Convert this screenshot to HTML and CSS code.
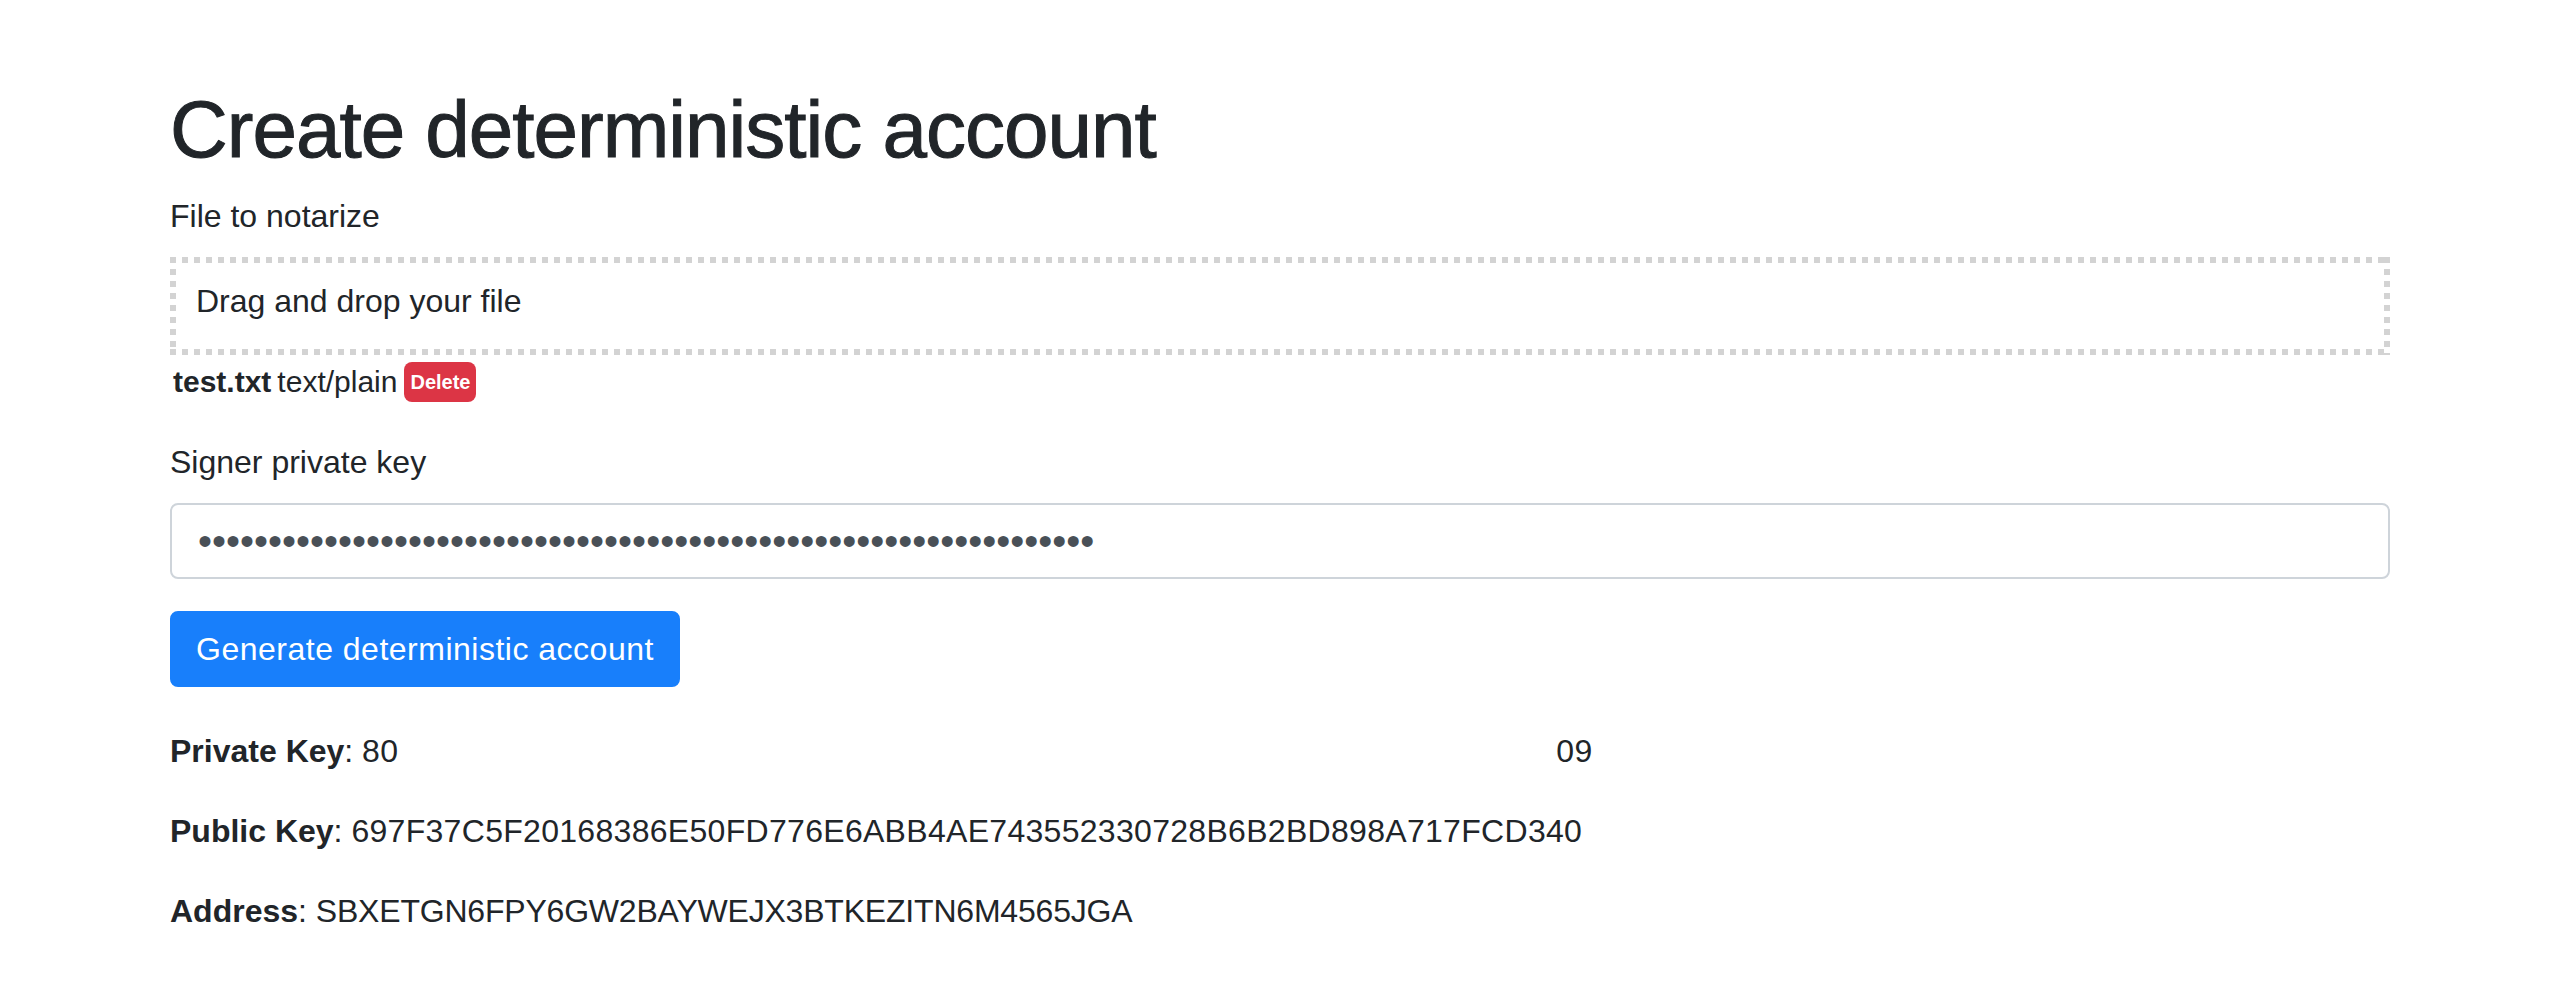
FILE: index.html
```html
<!DOCTYPE html>
<html lang="en">
<head>
<meta charset="utf-8">
<title>Create deterministic account</title>
<link rel="stylesheet" href="styles.css">
</head>
<body>
<div class="container">
  <h1 class="title">Create deterministic account</h1>
  <form class="form">
    <div class="form-group file-group">
      <label class="label">File to notarize</label>
      <div class="dropzone">Drag and drop your file</div>
      <div class="file-info">
        <strong class="file-name">test.txt</strong>
        <span class="file-type">text/plain</span>
        <span class="badge-delete">Delete</span>
      </div>
    </div>
    <div class="form-group">
      <label class="label" for="pk">Signer private key</label>
      <input id="pk" class="form-control" type="password" value="8000000000000000000000000000000000000000000000000000000000000009">
    </div>
    <button type="button" class="btn-primary">Generate deterministic account</button>
  </form>
  <div class="results">
    <p class="result"><strong>Private Key</strong>: <span class="hex">80</span><span class="redacted"></span><span class="hex">09</span></p>
    <p class="result"><strong>Public Key</strong>: <span class="hex">697F37C5F20168386E50FD776E6ABB4AE743552330728B6B2BD898A717FCD340</span></p>
    <p class="result"><strong>Address</strong>: <span class="addr">SBXETGN6FPY6GW2BAYWEJX3BTKEZITN6M4565JGA</span></p>
  </div>
</div>
</body>
</html>
```
FILE: styles.css
```css
* { box-sizing: border-box; }
html, body {
  margin: 0;
  padding: 0;
  background: #fff;
}
body {
  font-family: "Liberation Sans", Arial, sans-serif;
  font-size: 32px;
  line-height: 48px;
  color: #212529;
}
.container {
  width: 2280px;
  margin: 0 auto;
  padding: 82px 27px 40px 33px;
}
.title {
  margin: 0 0 14px;
  font-size: 80px;
  line-height: 96px;
  font-weight: 400;
  letter-spacing: -1px;
  -webkit-text-stroke: 1px #212529;
}
.form { margin: 0; }
.form-group { margin-bottom: 32px; }
.label {
  display: block;
  margin-bottom: 17px;
}
.dropzone {
  height: 98px;
  padding: 20px 26px 18px;
  background:
    linear-gradient(to right, #d3d3d3 6px, transparent 6px) left top / 12px 6px repeat-x,
    linear-gradient(to right, #d3d3d3 6px, transparent 6px) left bottom / 12px 6px repeat-x,
    linear-gradient(to bottom, #d3d3d3 6px, transparent 6px) left top / 6px 12px repeat-y,
    linear-gradient(to bottom, #d3d3d3 6px, transparent 6px) right top / 6px 12px repeat-y;
}
.file-info {
  display: flex;
  align-items: center;
  gap: 7px;
  padding: 7px 0 0 3px;
  height: 47px;
  font-size: 30px;
  line-height: 40px;
  margin-bottom: 36px;
}
.file-name { font-weight: 700; }
.file-type { margin-left: -1px; }
.badge-delete {
  display: inline-block;
  height: 40px;
  padding: 5px 6px;
  font-size: 20px;
  line-height: 30px;
  font-weight: 700;
  color: #fff;
  background: #dc3545;
  border-radius: 8px;
}
.file-group { margin-bottom: 0; }
.form-control {
  display: block;
  width: 100%;
  height: 76px;
  padding: 12px 24px 12px 26px;
  font-family: "Liberation Sans", Arial, sans-serif;
  font-size: 40px;
  letter-spacing: 0px;
  color: #495057;
  background: #fff;
  border: 2px solid #ced4da;
  border-radius: 8px;
  outline: none;
}
.btn-primary {
  display: inline-block;
  height: 76px;
  padding: 12px 24px;
  font-family: "Liberation Sans", Arial, sans-serif;
  font-size: 32px;
  line-height: 48px;
  letter-spacing: 0.5px;
  color: #fff;
  background: #187ffb;
  border: 2px solid #187ffb;
  border-radius: 8px;
  cursor: pointer;
}
.results { margin-top: 40px; }
.result {
  margin: 0 0 32px;
}
.result strong { font-weight: 700; }
.addr { letter-spacing: -0.2px; }
.hex { letter-spacing: 0.3px; }
.redacted {
  display: inline-block;
  width: 1158px;
}
```
